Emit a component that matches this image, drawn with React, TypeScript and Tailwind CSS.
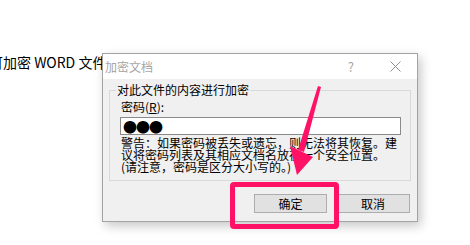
export default function App() {
  const cjk = { fontFamily: '"Noto Sans CJK SC", "Noto Sans", sans-serif' };
  return (
    <div className="relative w-[470px] h-[245px] overflow-hidden bg-white" style={cjk}>
      {/* page text behind the dialog */}
      <div className="pt-[52px] -ml-[11px] text-[14px] leading-[20px] text-black whitespace-nowrap">
        可加密 WORD 文件
      </div>

      {/* dialog window */}
      <div className="absolute left-[102px] top-[53px] w-[316px] h-[169px] border border-[#a3a3a3] bg-[#f0f0f0] shadow-[3px_4px_10px_rgba(0,0,0,0.22)] flex flex-col">
        <div className="h-[25px] bg-white flex items-center pl-[2px] pr-[16px] text-[#a6a6a6]">
          <span className="text-[12px] leading-none">加密文档</span>
          <span className="ml-auto mr-[36px] text-[13px] leading-none">?</span>
          <svg width="11" height="11" viewBox="0 0 11 11">
            <path d="M0.5 0.5 L10.5 10.5 M10.5 0.5 L0.5 10.5" stroke="#8f8f8f" strokeWidth="1" />
          </svg>
        </div>

        <div className="flex-1 flex flex-col px-[6px] pt-[11px]">
          {/* group box */}
          <div className="relative h-[91px] border border-[#d9d9d9] pl-[10px] pr-[9px] pt-[9px]">
            <span className="absolute left-[6px] -top-[8px] bg-[#f0f0f0] px-[1px] text-[12px] leading-[14px] text-black">
              对此文件的内容进行加密
            </span>
            <div className="text-[12px] leading-[14px] text-black pl-[1px]">
              密码(<span className="underline">R</span>):
            </div>
            <div className="mt-[3px] h-[18px] border border-[#8a8a8a] bg-white flex items-center pl-[2px] text-[14px] leading-none tracking-[-1px] text-black">
              ●●●
            </div>
            <div className="mt-[2px] pl-[1px] text-[12px] leading-[12px] text-black whitespace-nowrap">
              警告：如果密码被丢失或遗忘，则无法将其恢复。建
              <br />
              议将密码列表及其相应文档名放在一个安全位置。
              <br />
              (请注意，密码是区分大小写的。)
            </div>
          </div>

          {/* buttons */}
          <div className="flex justify-end gap-[9px] mt-[13px] pr-[1px]">
            <button className="w-[73px] h-[19px] border border-[#adadad] bg-[#e1e1e1] text-[12px] leading-none text-black">
              确定
            </button>
            <button className="w-[74px] h-[19px] border border-[#adadad] bg-[#e1e1e1] text-[12px] leading-none text-black">
              取消
            </button>
          </div>
        </div>
      </div>

      {/* pink highlight */}
      <div className="absolute left-[230px] top-[182px] w-[109px] h-[47px] border-[5px] border-[#ff1166] rounded-[4px]" />

      {/* pink arrow */}
      <svg className="absolute left-0 top-0" width="470" height="245" viewBox="0 0 470 245">
        <polygon points="318,86 321,87 304,152 298,150" fill="#ff1166" />
        <polygon points="290,146 313,157 297,175" fill="#ff1166" />
      </svg>
    </div>
  );
}
